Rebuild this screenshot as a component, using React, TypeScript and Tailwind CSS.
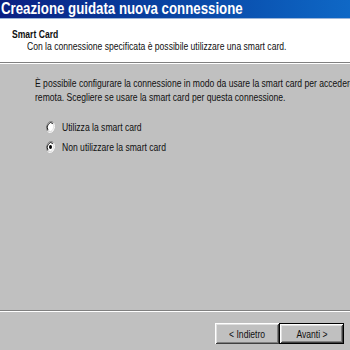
import React from "react";

const S = ({ children, className = "" }: { children: React.ReactNode; className?: string }) => (
  <span className={`inline-block whitespace-nowrap origin-left scale-x-[0.78] ${className}`}>{children}</span>
);

const Radio = ({ checked }: { checked?: boolean }) => (
  <svg width="9" height="12" viewBox="0 0 12 12" preserveAspectRatio="none" className="shrink-0">
    <path d="M10.2 1.8 A6 6 0 0 0 1.8 10.2" fill="none" stroke="#808080" strokeWidth="1" />
    <path d="M1.8 10.2 A6 6 0 0 0 10.2 1.8" fill="none" stroke="#ffffff" strokeWidth="1" />
    <circle cx="6" cy="6" r="4.6" fill="#ffffff" />
    <path d="M9.3 2.7 A4.7 4.7 0 0 0 2.7 9.3" fill="none" stroke="#000000" strokeWidth="1" />
    <path d="M2.7 9.3 A4.7 4.7 0 0 0 9.3 2.7" fill="none" stroke="#dfdfdf" strokeWidth="1" />
    {checked && <circle cx="6" cy="6" r="2" fill="#000000" />}
  </svg>
);

export default function App() {
  return (
    <div className="w-[350px] h-[350px] overflow-hidden bg-[#c0c0c0] flex flex-col font-['Liberation_Sans',Arial,sans-serif] text-[11px] leading-[12px] text-[#101010]">
      <div className="h-[19px] shrink-0 bg-linear-to-r from-[#0a1f82] to-[#0f68c6] border-b border-[#9cb6da] pl-[1px] text-white font-bold text-[17px] leading-[18px]">
        <S>Creazione guidata nuova connessione</S>
      </div>
      <div className="h-[43px] shrink-0 bg-white flex flex-col pt-[9px]">
        <div className="pl-[12px] font-bold">
          <S>Smart Card</S>
        </div>
        <div className="pl-[27px]">
          <S>Con la connessione specificata è possibile utilizzare una smart card.</S>
        </div>
      </div>
      <div className="h-[2px] shrink-0 border-t border-b border-t-[#808080] border-b-white" />
      <div className="flex-1 flex flex-col pl-[35px] pt-[12px] leading-[14px]">
        <div className="overflow-hidden">
          <S>È possibile configurare la connessione in modo da usare la smart card per accedere alla rete</S>
        </div>
        <div>
          <S>remota. Scegliere se usare la smart card per questa connessione.</S>
        </div>
        <div className="mt-[13px] ml-[11px] flex flex-col">
          <div className="h-[20px] flex items-center gap-[7px]">
            <Radio />
            <S>Utilizza la smart card</S>
          </div>
          <div className="h-[20px] flex items-center gap-[7px]">
            <Radio checked />
            <S>Non utilizzare la smart card</S>
          </div>
        </div>
      </div>
      <div className="h-[2px] shrink-0 border-t border-b border-t-[#808080] border-b-white" />
      <div className="h-[38px] shrink-0 flex justify-end items-start pt-[11px] pr-[6px]">
        <button className="w-[64px] h-[21px] bg-[#c0c0c0] flex items-center justify-center shadow-[inset_1px_1px_#ffffff,inset_-1px_-1px_#404040,inset_2px_2px_#dfdfdf,inset_-2px_-2px_#808080]">
          <span className="inline-block whitespace-nowrap origin-center scale-x-[0.78]">&lt; Indietro</span>
        </button>
        <button className="w-[65px] h-[21px] bg-[#c0c0c0] border border-black flex items-center justify-center shadow-[inset_1px_1px_#ffffff,inset_-1px_-1px_#404040,inset_2px_2px_#dfdfdf,inset_-2px_-2px_#808080]">
          <span className="inline-block whitespace-nowrap origin-center scale-x-[0.78]">Avanti &gt;</span>
        </button>
      </div>
    </div>
  );
}
